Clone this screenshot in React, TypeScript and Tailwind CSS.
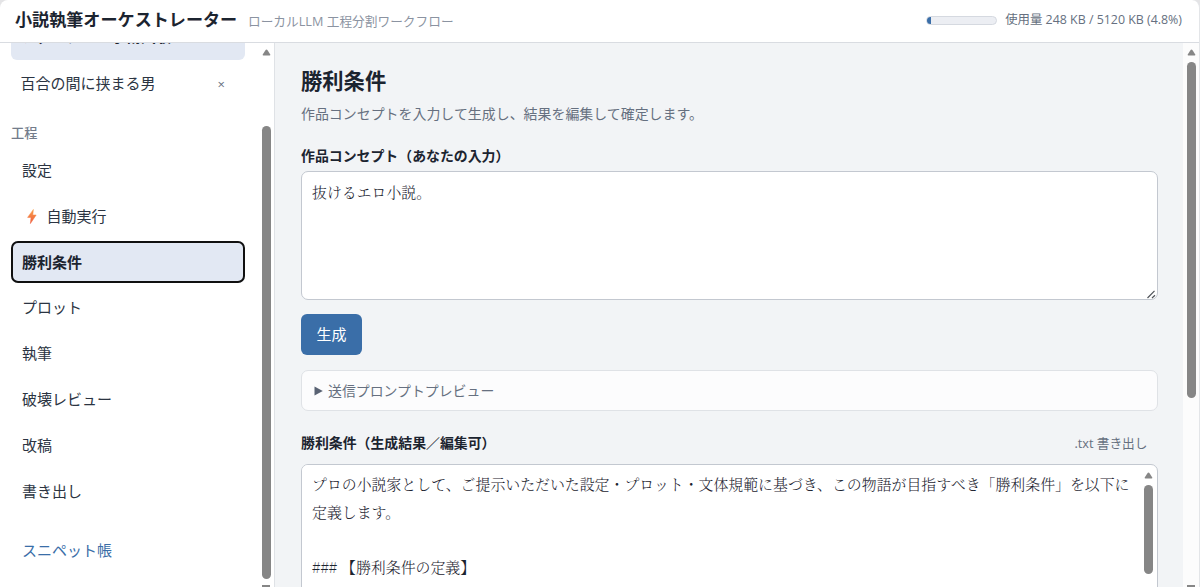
import { useState } from "react";

const STEPS = [
  { id: "settings", label: "設定" },
  { id: "auto", label: "自動実行", bolt: true },
  { id: "victory", label: "勝利条件" },
  { id: "plot", label: "プロット" },
  { id: "write", label: "執筆" },
  { id: "review", label: "破壊レビュー" },
  { id: "revise", label: "改稿" },
  { id: "export", label: "書き出し" },
];

const RESULT = `プロの小説家として、ご提示いただいた設定・プロット・文体規範に基づき、この物語が目指すべき「勝利条件」を以下に定義します。

### 【勝利条件の定義】`;

const Bolt = () => (
  <svg width="10" height="15" viewBox="0 0 10 15" className="ml-[5px] mr-[9.5px] shrink-0">
    <defs>
      <linearGradient id="bolt" x1="0" y1="0" x2="0" y2="1">
        <stop offset="0" stopColor="#f9a04a" />
        <stop offset="1" stopColor="#ee5a3c" />
      </linearGradient>
    </defs>
    <path d="M6.4 0.4 L0.6 8.4 H4 L3.4 14.6 L9.2 6 H5.8 Z" fill="url(#bolt)" stroke="url(#bolt)" strokeWidth="0.5" strokeLinejoin="round" />
  </svg>
);

const ArrowUp = () => (
  <svg width="9" height="7" viewBox="0 0 9 7" className="shrink-0">
    <path d="M4.5 0.4 Q5 0.4 5.4 1 L8.3 5.4 Q8.5 6.5 7.6 6.5 H1.4 Q0.5 6.5 0.7 5.4 L3.6 1 Q4 0.4 4.5 0.4 Z" fill="#868686" />
  </svg>
);

export default function App() {
  const [active, setActive] = useState("victory");
  const [concept, setConcept] = useState("抜けるエロ小説。");
  const [result, setResult] = useState(RESULT);

  return (
    <div className="h-[587px] w-[1200px] bg-[#e4e4e6] font-['Open_Sans','Noto_Sans_CJK_JP',sans-serif] text-[#1c2430]">
      <div className="flex h-full flex-col overflow-hidden rounded-t-lg border-r border-[#e3e5e8] bg-white">
        {/* Header */}
        <header className="flex h-[43px] shrink-0 items-center border-b border-[#d9dce1] pl-[15px] pr-[17px] pb-[2px]">
          <h1 className="w-[233px] shrink-0 whitespace-nowrap text-[17.1px] font-bold leading-none">小説執筆オーケストレーター</h1>
          <span className="whitespace-nowrap pt-[3px] text-[12.7px] leading-none text-[#8b93a1]">ローカルLLM 工程分割ワークフロー</span>
          <div className="ml-auto flex items-center">
            <div className="h-[9px] w-[71px] overflow-hidden rounded-full border border-[#d5d9e0] bg-[#eceef3]">
              <div className="h-full bg-[#3a6ea8]" style={{ width: "4.8%" }} />
            </div>
            <span className="ml-[8px] whitespace-nowrap pt-[1px] text-[12.4px] leading-none text-[#667080]">使用量 248 KB / 5120 KB (4.8%)</span>
          </div>
        </header>

        <div className="flex min-h-0 flex-1">
          {/* Sidebar */}
          <aside className="flex w-[275px] shrink-0 border-r border-[#dfe2e6]">
            <div className="flex w-[245px] flex-col overflow-hidden pl-[11px]">
              <div className="flex h-[17px] shrink-0 items-end overflow-hidden rounded-b-md bg-[#e2e8f3] pb-[15px] pl-[10px]">
                <span className="whitespace-nowrap text-[15px] font-bold leading-[18px]">ファンタジー学術試験</span>
              </div>
              <div className="mt-[2px] flex h-[42px] shrink-0 items-center justify-between pl-[9.5px] pr-[20px]">
                <span className="text-[15px] leading-none text-[#2b3442]">百合の間に挟まる男</span>
                <button className="pt-[2px] text-[13px] leading-none text-[#667080]">×</button>
              </div>
              <div className="mt-[22px] shrink-0 text-[13.2px] font-medium leading-[14px] text-[#737c8b]">工程</div>
              <nav className="mt-[9.4px] flex shrink-0 flex-col gap-[3.85px]">
                {STEPS.map((s) => (
                  <button
                    key={s.id}
                    onClick={() => setActive(s.id)}
                    className={`flex h-[42px] w-full items-center rounded-[7px] pl-[11px] text-[15px] leading-none ${
                      active === s.id ? "bg-[#e2e8f3] font-bold outline-2 -outline-offset-2 outline-[#101010]" : "text-[#2b3442]"
                    }`}
                  >
                    {s.bolt && <Bolt />}
                    {s.label}
                  </button>
                ))}
              </nav>
              <a className="mt-[28.2px] shrink-0 pl-[11px] text-[15px] leading-[20px] text-[#3a6ea8]">スニペット帳</a>
            </div>
            <div className="ml-auto mr-[1px] flex w-[14px] flex-col items-center pt-[6px]">
              <ArrowUp />
              <div className="mt-[70px] h-[453px] w-[9px] shrink-0 rounded-full bg-[#868686]" />
              <div className="mt-[6px] h-[3px] w-[8px] shrink-0 bg-[#868686]" />
            </div>
          </aside>

          {/* Main */}
          <main className="flex min-w-0 flex-1 flex-col overflow-hidden bg-[#f2f4f6] pl-[26px] pr-[25.5px]">
            <h2 className="mt-[25px] shrink-0 text-[21.3px] font-bold leading-[26px]">勝利条件</h2>
            <p className="mt-[10px] shrink-0 text-[13.95px] leading-[20px] text-[#667080]">作品コンセプトを入力して生成し、結果を編集して確定します。</p>
            <label className="mt-[22px] shrink-0 text-[13.9px] font-bold leading-[20px]">作品コンセプト（あなたの入力）</label>
            <div className="relative mt-[5px] h-[129px] shrink-0">
              <textarea
                value={concept}
                onChange={(e) => setConcept(e.target.value)}
                className="block h-full w-full resize-none overflow-hidden rounded-[7px] border border-[#c3c8d0] bg-white px-[10px] py-[6px] font-['Noto_Serif_CJK_JP','Noto_Serif_JP','Liberation_Serif','Noto_Sans_CJK_JP',serif] text-[14.9px] font-light leading-[27.5px] outline-none"
              />
              <svg width="9" height="9" viewBox="0 0 9 9" className="absolute bottom-[1px] right-[2px]">
                <path d="M0.5 8 L7.5 0.8 M5 8 L8 5.2" stroke="#50545a" strokeWidth="1.2" fill="none" />
              </svg>
            </div>
            <button className="mt-[14px] h-[41px] w-[61px] shrink-0 rounded-[6px] bg-[#3a6ea8] text-[15px] leading-none text-white">生成</button>
            <div className="mt-[15px] flex h-[41px] shrink-0 items-center rounded-[7px] border border-[#dfe2e6] bg-[#fcfcfd] pl-[12px] text-[13.9px] leading-none text-[#667080]">
              <svg width="9" height="10" viewBox="0 0 9 10" className="mr-[5px]">
                <path d="M0.5 0.5 L8.8 5 L0.5 9.5 Z" fill="#596273" />
              </svg>
              送信プロンプトプレビュー
            </div>
            <div className="mt-[22px] flex shrink-0 items-center justify-between leading-[20px]">
              <label className="text-[13.9px] font-bold">勝利条件（生成結果／編集可）</label>
              <span className="pr-[10px] text-[12.7px] text-[#667080]">.txt 書き出し</span>
            </div>
            <div className="mt-[11px] flex h-[200px] shrink-0 overflow-hidden rounded-[7px] border border-[#c3c8d0] bg-white">
              <textarea
                value={result}
                onChange={(e) => setResult(e.target.value)}
                className="block h-full min-w-0 flex-1 resize-none overflow-hidden bg-white py-[5px] pl-[10px] pr-[6px] font-['Noto_Serif_CJK_JP','Noto_Serif_JP','Liberation_Serif','Noto_Sans_CJK_JP',serif] text-[14.9px] font-light leading-[27.5px] outline-none"
              />
              <div className="flex w-[15px] flex-col items-center pr-[2px] pt-[7px]">
                <ArrowUp />
                <div className="mt-[6px] h-[89px] w-[9px] shrink-0 rounded-full bg-[#868686]" />
              </div>
            </div>
          </main>

          <div className="flex w-[16px] shrink-0 flex-col items-center bg-[#fcfcfc] pt-[6px]">
            <ArrowUp />
            <div className="mt-[6px] h-[336px] w-[9px] shrink-0 rounded-full bg-[#868686]" />
            <div className="mt-[187px] h-[3px] w-[8px] shrink-0 bg-[#868686]" />
          </div>
        </div>
      </div>
    </div>
  );
}
